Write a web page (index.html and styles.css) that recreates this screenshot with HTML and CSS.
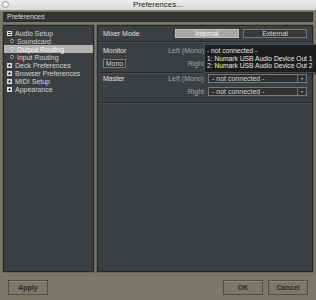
FILE: index.html
```html
<!DOCTYPE html>
<html>
<head>
    <link rel="stylesheet" href="styles.css">
</head>
<body>
    <div class="titlebar">
        <span class="close"></span>
        <span class="title">Preferences...</span>
    </div>
    <div class="window">
        <div class="header">Preferences</div>
        <div class="panels">
            <div class="tree">
                <div class="row"><span class="box minus"></span>Audio Setup</div>
                <div class="row sub"><span class="gear"></span>Soundcard</div>
                <div class="row sub selected"><span class="gear"></span>Output Routing</div>
                <div class="row sub"><span class="gear"></span>Input Routing</div>
                <div class="row"><span class="box plus"></span>Deck Preferences</div>
                <div class="row"><span class="box plus"></span>Browser Preferences</div>
                <div class="row"><span class="box plus"></span>MIDI Setup</div>
                <div class="row"><span class="box plus"></span>Appearance</div>
            </div>
            <div class="settings">
                <div class="section mode">
                    <span class="label">Mixer Mode</span>
                    <div class="toggle">
                        <span class="tbtn on">Internal</span>
                        <span class="tbtn">External</span>
                    </div>
                </div>
                <div class="section routing monitor">
                    <span class="label">Monitor</span>
                    <span class="side">Left (Mono)</span>
                    <span class="select covered"><span>- not connected -</span><i></i></span>
                    <span class="mono">Mono</span>
                    <span class="side">Right</span>
                    <span class="select covered"><span>- not connected -</span><i></i></span>
                    <div class="popup">
                        <div class="opt">- not connected -</div>
                        <div class="opt">1: Numark USB Audio Device Out 1</div>
                        <div class="opt">2: Numark USB Audio Device Out 2</div>
                    </div>
                </div>
                <div class="section routing master">
                    <span class="label">Master</span>
                    <span class="side">Left (Mono)</span>
                    <span class="select"><span>- not connected -</span><i></i></span>
                    <span></span>
                    <span class="side">Right</span>
                    <span class="select"><span>- not connected -</span><i></i></span>
                </div>
            </div>
        </div>
        <div class="footer">
            <span class="btn">Apply</span>
            <span class="spacer"></span>
            <span class="btn">OK</span>
            <span class="btn">Cancel</span>
        </div>
    </div>
</body>
</html>
```
FILE: styles.css
```css
body {
    margin: 0;
    width: 316px;
    height: 300px;
    overflow: hidden;
    background-color: #7b786a;
    font-family: "Liberation Sans", Arial, sans-serif;
    font-size: 7px;
    color: #d6d6d4;
}

.titlebar {
    height: 10px;
    position: relative;
    background: linear-gradient(#ededed, #d9d9d9);
    border-bottom: 1px solid #8a887e;
    text-align: center;
    color: #222;
    font-size: 8px;
    line-height: 10px;
}

.close {
    position: absolute;
    left: 2px;
    top: 1px;
    width: 5px;
    height: 5px;
    border: 1px solid #9a9a9a;
    border-radius: 50%;
    background: #f4f4f4;
}

.window {
    padding: 1px 3px 0 3px;
}

.header {
    height: 8px;
    line-height: 8px;
    padding-left: 3px;
    background-color: #323534;
    border: 1px solid #2a2c2b;
    color: #d8d8d8;
}

.panels {
    display: flex;
    gap: 3px;
    margin-top: 3px;
    height: 247px;
}

.tree,
.settings {
    background-color: #3c3f41;
    border: 1px solid #262827;
    box-shadow: 0 0 0 1px #66645a;
}

.tree {
    width: 89px;
    padding-top: 3px;
}

.settings {
    flex: 1;
    position: relative;
}

.row {
    display: flex;
    align-items: center;
    height: 8px;
    padding-left: 3px;
    white-space: nowrap;
}

.row.sub {
    padding-left: 6px;
}

.row.selected {
    background-color: #b3b3b1;
    color: #f4f4f4;
}

.box {
    width: 3px;
    height: 3px;
    border: 1px solid #dcdcdc;
    margin-right: 3px;
    position: relative;
}

.box.minus::after {
    content: "";
    position: absolute;
    left: 0;
    top: 1px;
    width: 3px;
    height: 1px;
    background: #dcdcdc;
}

.box.plus {
    background: #dcdcdc;
}

.box.plus::before,
.box.plus::after {
    content: "";
    position: absolute;
    background: #3c3f41;
}

.box.plus::before {
    left: 1px;
    top: 0;
    width: 1px;
    height: 3px;
}

.box.plus::after {
    left: 0;
    top: 1px;
    width: 3px;
    height: 1px;
}

.gear {
    width: 2px;
    height: 2px;
    border: 1.5px dotted #e0e0e0;
    border-radius: 50%;
    margin-right: 3px;
}

.section {
    border-bottom: 1px solid #26282a;
    box-shadow: 0 1px 0 #4c4f51;
    padding: 0 5px;
}

.mode {
    display: flex;
    align-items: center;
    height: 15px;
}

.label {
    color: #e0e0e0;
}

.toggle {
    display: flex;
    gap: 4px;
    margin-left: auto;
}

.tbtn {
    width: 62px;
    height: 7px;
    line-height: 7px;
    text-align: center;
    border: 1px solid #77797b;
    background-color: #363839;
}

.tbtn.on {
    background-color: #a7a7a7;
    border-color: #bdbdbd;
    color: #f6f6f6;
}

.routing {
    display: grid;
    grid-template-columns: 1fr auto 99px;
    grid-auto-rows: 9px;
    row-gap: 4px;
    column-gap: 4px;
    align-items: center;
    position: relative;
}

.monitor {
    padding-top: 4px;
    padding-bottom: 4px;
}

.master {
    padding-top: 1px;
    padding-bottom: 6px;
}

.side {
    color: #a3a3a3;
    text-align: right;
}

.select {
    display: flex;
    height: 7px;
    line-height: 7px;
    border: 1px solid #77797b;
    background-color: #2f3132;
}

.select.covered {
    visibility: hidden;
}

.select span {
    flex: 1;
    padding-left: 3px;
}

.select i {
    width: 8px;
    border-left: 1px solid #6b6d6f;
    position: relative;
}

.select i::after {
    content: "";
    position: absolute;
    left: 3px;
    top: 3px;
    border-left: 1px solid transparent;
    border-right: 1px solid transparent;
    border-top: 2px solid #cfcfcf;
}

.mono {
    justify-self: start;
    width: 21px;
    height: 7px;
    line-height: 7px;
    text-align: center;
    border: 1px solid #77797b;
    background-color: #2f3132;
}

.popup {
    position: absolute;
    left: 106px;
    top: 2px;
    width: 116px;
    padding: 2px 0 2px 2px;
    background-color: #1c1d1e;
    border: 1px solid #4b4c4d;
    box-shadow: 1px 1px 2px rgba(0, 0, 0, 0.6);
    font-size: 6.7px;
}

.opt {
    height: 7.7px;
    line-height: 7.7px;
    white-space: nowrap;
    color: #e8e8e8;
}

.footer {
    display: flex;
    gap: 5px;
    margin-top: 8px;
    padding: 0 5px;
}

.spacer {
    flex: 1;
}

.btn {
    width: 38px;
    height: 13px;
    line-height: 13px;
    text-align: center;
    border: 1px solid #4f4d44;
    box-shadow: inset 0 1px 0 #8e8b7f;
    color: #2a2a26;
    font-weight: bold;
}
```
